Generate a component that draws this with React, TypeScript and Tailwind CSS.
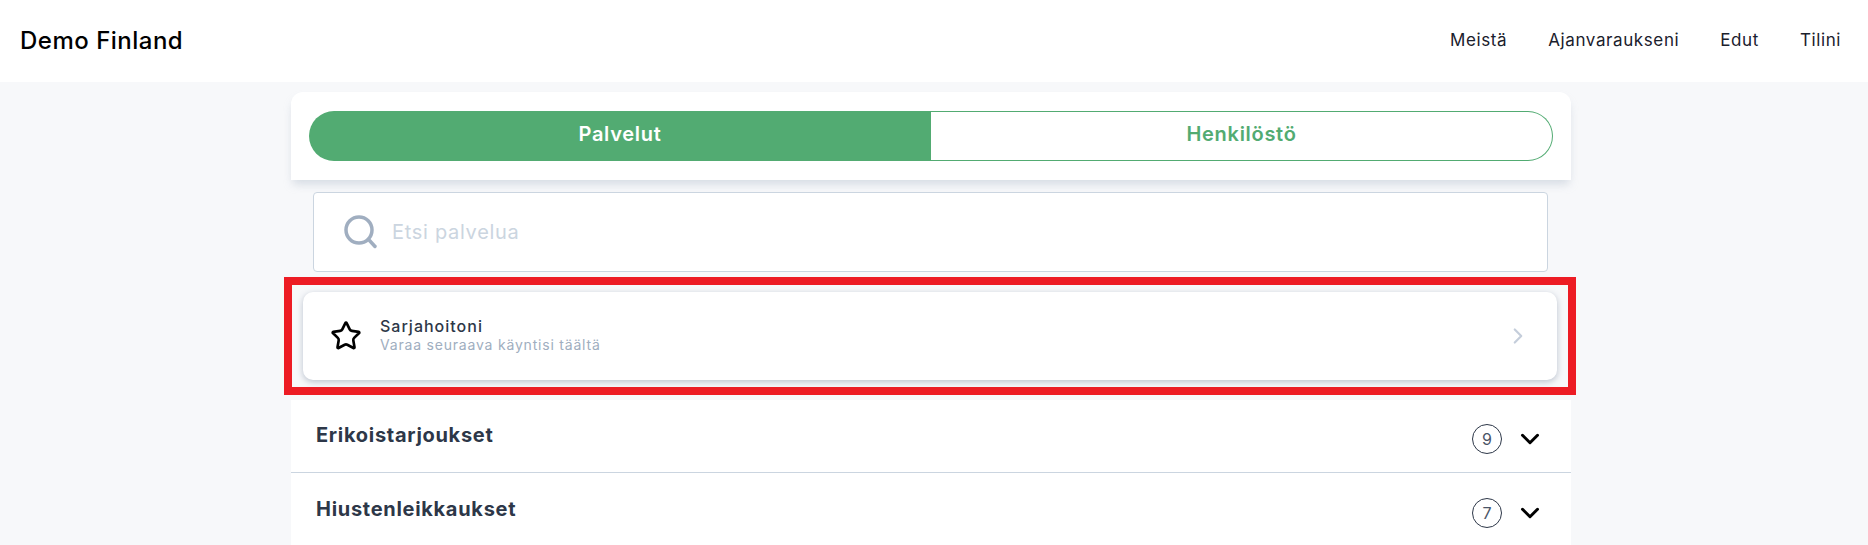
import { ChevronDown, ChevronRight, Star } from "lucide-react";

const font = "font-['Inter','Liberation_Sans',sans-serif]";

function Row({ title, count, border }: { title: string; count: number; border?: boolean }) {
  return (
    <div className={`flex h-[73px] items-center justify-between bg-white pl-[25px] pr-[26px] ${border ? "border-b border-[#cbd5e0]" : ""}`}>
      <h3 className="mb-[2px] text-[20px] font-bold tracking-[0.7px] text-[#2d3748]">{title}</h3>
      <div className="mt-[6px] flex items-center gap-[13px]">
        <span className="flex h-[30px] w-[30px] items-center justify-center rounded-full border border-[#2d3748] text-[16px] text-[#4a5568]">{count}</span>
        <ChevronDown className="h-[30px] w-[30px] text-black" strokeWidth={2.4} />
      </div>
    </div>
  );
}

export default function App() {
  return (
    <div className={`h-[545px] overflow-hidden bg-[#f7f8fa] ${font}`}>
      <header className="flex h-[82px] items-center justify-between bg-white pl-[20px] pr-[27px]">
        <span className="text-[24px] font-medium tracking-[0.5px] text-black">Demo Finland</span>
        <nav className="flex gap-[41px] text-[17px] tracking-[0.6px] text-[#1a202c]">
          <a>Meistä</a>
          <a>Ajanvaraukseni</a>
          <a>Edut</a>
          <a>Tilini</a>
        </nav>
      </header>
      <main className="ml-[291px] w-[1280px] pt-[10px]">
        <div className="h-[88px] rounded-t-[12px] bg-white pl-[18px] pr-[18px] pt-[19px] shadow-[0_6px_10px_-2px_rgba(160,174,192,0.4)]">
          <div className="flex h-[50px]">
            <button className="w-[622px] rounded-l-full bg-[#52ab72] pb-[4px] text-[20px] font-semibold tracking-[0.7px] text-white">Palvelut</button>
            <button className="flex-1 rounded-r-full border border-l-0 border-[#52ab72] bg-white pb-[4px] text-[20px] font-semibold tracking-[0.7px] text-[#52ab72]">Henkilöstö</button>
          </div>
        </div>
        <div className="ml-[22px] mr-[23px] mt-[12px] flex h-[80px] items-center rounded-[4px] border border-[#cbd5e0] bg-white pl-[30px]">
          <svg width="34" height="34" viewBox="0 0 34 34" fill="none" stroke="#a0aec0" strokeWidth="3.5" strokeLinecap="round" className="shrink-0">
            <circle cx="15" cy="15" r="13" />
            <path d="M25.5 25.5l5.5 6" />
          </svg>
          <span className="ml-[14px] text-[20px] tracking-[0.7px] text-[#cbd5e0]">Etsi palvelua</span>
        </div>
        <div className="-ml-[7px] -mr-[5px] mt-[5px] border-[8px] border-[#ed1c24] px-[11px] pb-[7px] pt-[7px]">
          <div className="flex h-[88px] items-center rounded-[10px] bg-white pl-[27px] pr-[26px] shadow-[0_2px_6px_rgba(113,128,150,0.45)]">
            <Star className="h-[32px] w-[32px] text-black" strokeWidth={2} />
            <div className="mb-[2px] ml-[18px] flex-1 leading-none">
              <div className="text-[16px] font-medium leading-[20px] tracking-[1px] text-[#2d3748]">Sarjahoitoni</div>
              <div className="text-[14px] leading-[18px] tracking-[0.8px] text-[#a0aec0]">Varaa seuraava käyntisi täältä</div>
            </div>
            <ChevronRight className="h-[26px] w-[26px] text-[#c5cedb]" strokeWidth={2} />
          </div>
        </div>
        <div className="mt-[5px]">
          <Row title="Erikoistarjoukset" count={9} border />
          <Row title="Hiustenleikkaukset" count={7} />
        </div>
      </main>
    </div>
  );
}
